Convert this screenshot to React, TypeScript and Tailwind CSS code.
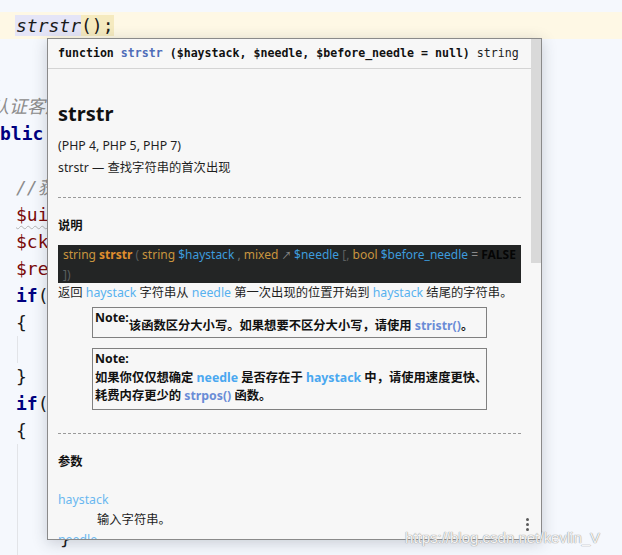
const mono = "font-['DejaVu_Sans_Mono','Noto_Sans_CJK_SC',monospace]";
const sans = "font-['Noto_Sans','Noto_Sans_CJK_SC',sans-serif]";

const Line = ({ children, className = "" }: { children?: React.ReactNode; className?: string }) => (
  <div className={`h-[27px] leading-[27px] whitespace-nowrap ${className}`}>{children}</div>
);

const Guide = () => (
  <div className="h-[27px] ml-[17px] border-l border-[#e2e4e8]" />
);

function Editor() {
  return (
    <div className={`${mono} text-[18px] pt-[12px]`}>
      <Line className="bg-[#fef8e5] pl-[15px]">
        <span className="italic bg-[#e5e5f7] pl-px text-[#1a1a1a]">strstr</span>
        <span className="bg-[#f5eabf] text-[#1a1a1a]">();</span>
      </Line>
      <Line />
      <Line />
      <Line>
        <span className="italic text-[#8c8c8c] ml-[-9px] inline-block">认证客户端配置</span>
      </Line>
      <Line>
        <span className="font-bold text-[#000080] ml-[-21.7px] inline-block">public function login()</span>
      </Line>
      <Line />
      <Line className="pl-[16px] italic text-[#8c8c8c]">//获取用户信息</Line>
      <Line className="pl-[16px] text-[#7a0a0a]">
        <span className="underline decoration-wavy decoration-[#b5b5b5] decoration-1 underline-offset-4">$uid</span> = $this-&gt;uid;
      </Line>
      <Line className="pl-[16px] text-[#7a0a0a]">$ckey = $this-&gt;key;</Line>
      <Line className="pl-[16px] text-[#7a0a0a]">$res = null;</Line>
      <Line className="pl-[16px]">
        <span className="font-bold text-[#000080]">if</span>
        <span className="text-[#1a1a1a]">(</span>
      </Line>
      <Line className="pl-[16px] text-[#1a1a1a]">{"{"}</Line>
      <Guide />
      <Line className="pl-[16px] text-[#1a1a1a]">{"}"}</Line>
      <Line className="pl-[16px]">
        <span className="font-bold text-[#000080]">if</span>
        <span className="text-[#1a1a1a]">(</span>
      </Line>
      <Line className="pl-[16px] text-[#1a1a1a]">{"{"}</Line>
      <Guide />
      <Guide />
      <Guide />
      <div className="h-[30px] ml-[17px] border-l border-[#e2e4e8] pl-[42px] leading-[27px] text-[#1a1a1a]">{"}"}</div>
    </div>
  );
}

function Dashed() {
  return <div className="border-t border-dashed border-[#9a9a9a]" />;
}

function Popup() {
  return (
    <div className="absolute left-[47px] top-[38px] w-[495px] h-[502px] border border-[#8a8a8a] bg-[#f7f7f7] shadow-[0_3px_14px_rgba(40,50,70,0.22)] flex overflow-hidden">
      <div className="flex-1 min-w-0 flex flex-col">
        <div className={`h-[30px] shrink-0 border-b border-[#d4d4d4] pl-[10px] flex items-center whitespace-nowrap ${mono} text-[11.6px] text-[#111]`}>
          <span className="font-bold">function </span>
          <span className="font-bold text-[#4f6db8]">&nbsp;strstr</span>
          <span className="font-bold">&nbsp;($haystack, $needle, $before_needle = null)</span>
          <span className="text-[#222]">&nbsp;string</span>
        </div>
        <div className={`px-[10px] overflow-hidden flex-1 ${sans} text-[12.3px] text-[#1f1f1f]`}>
          <h1 className="mt-[35px] h-[20px] leading-[20px] text-[20px] font-bold text-[#111]">strstr</h1>
          <div className="mt-[11px] leading-[22px]">(PHP 4, PHP 5, PHP 7)</div>
          <div className="leading-[22px]">strstr — 查找字符串的首次出现</div>
          <div className="mt-[18px]"><Dashed /></div>
          <div className="mt-[18px] leading-[20px] font-bold text-[#111]">说明</div>
          <div className="mt-[9px] bg-[#232525] pl-[5px] text-[12px] leading-[19px] h-[38px] whitespace-nowrap overflow-hidden">
            <div>
              <span className="text-[#c9953f]">string </span>
              <span className="text-[#e08f2e] font-bold">strstr</span>
              <span className="text-[#5b6060]"> ( </span>
              <span className="text-[#c9953f]">string </span>
              <span className="text-[#3d9bdc]">$haystack</span>
              <span className="text-[#6f7474]"> , </span>
              <span className="text-[#c9953f]">mixed </span>
              <span className="text-[#8a8a8a] text-[10px]">↗ </span>
              <span className="text-[#3d9bdc]"> $needle</span>
              <span className="text-[#5b6060]"> [, </span>
              <span className="text-[#c9953f]">bool </span>
              <span className="text-[#3d9bdc]">$before_needle</span>
              <span className="text-[#8a8a8a]"> = </span>
              <span className="text-[#050505] font-bold">FALSE</span>
            </div>
            <div className="text-[#5b6060]">])</div>
          </div>
          <div className="leading-[20px] whitespace-nowrap">
            返回 <span className="text-[#58b2ef]">haystack</span> 字符串从 <span className="text-[#58b2ef]">needle</span> 第一次出现的位置开始到 <span className="text-[#58b2ef]">haystack</span> 结尾的字符串。
          </div>
          <div className="mt-[4px] ml-[34px] w-[395px] h-[31px] border border-[#808080] font-bold text-[#111] flex pl-[2px] whitespace-nowrap">
            <span className="leading-[16px] pt-[2px]">Note:</span>
            <span className="leading-[16px] pt-[10px]">
              该函数区分大小写。如果想要不区分大小写，请使用 <span className="text-[#6a8cd6]">stristr()</span>。
            </span>
          </div>
          <div className="mt-[10px] ml-[34px] w-[395px] h-[62px] border border-[#808080] font-bold text-[#111] pl-[2px] pt-[1px] leading-[18.5px] whitespace-nowrap">
            <div>Note:</div>
            <div>
              如果你仅仅想确定 <span className="text-[#4aa8f0]">needle</span> 是否存在于 <span className="text-[#4aa8f0]">haystack</span> 中，请使用速度更快、
            </div>
            <div>
              耗费内存更少的 <span className="text-[#6a8cd6]">strpos()</span> 函数。
            </div>
          </div>
          <div className="mt-[23px]"><Dashed /></div>
          <div className="mt-[18px] leading-[20px] font-bold text-[#111]">参数</div>
          <div className="mt-[18px] leading-[20px] text-[#6ab7f0]">haystack</div>
          <div className="leading-[20px] pl-[39px]">输入字符串。</div>
          <div className="leading-[20px] text-[#6ab7f0]">needle</div>
        </div>
      </div>
      <div className="w-[10px] shrink-0">
        <div className="h-[224px] bg-[#d9d9d9]" />
      </div>
      <div className="absolute right-[12px] bottom-[8px] flex flex-col gap-[2px]">
        <span className="w-[3px] h-[3px] rounded-full bg-[#5a5a5a]" />
        <span className="w-[3px] h-[3px] rounded-full bg-[#5a5a5a]" />
        <span className="w-[3px] h-[3px] rounded-full bg-[#5a5a5a]" />
      </div>
    </div>
  );
}

export default function App() {
  return (
    <div className="relative w-[622px] h-[555px] overflow-hidden bg-[#f5f8fd]">
      <Editor />
      <Popup />
      <div className="absolute left-[405px] top-[527px] font-['Liberation_Sans',sans-serif] text-[15px] text-white/90 [text-shadow:0_0_1px_#8a8a8a,0_0_1px_#9a9a9a] whitespace-nowrap">
        https://blog.csdn.net/kevlin_V
      </div>
    </div>
  );
}
